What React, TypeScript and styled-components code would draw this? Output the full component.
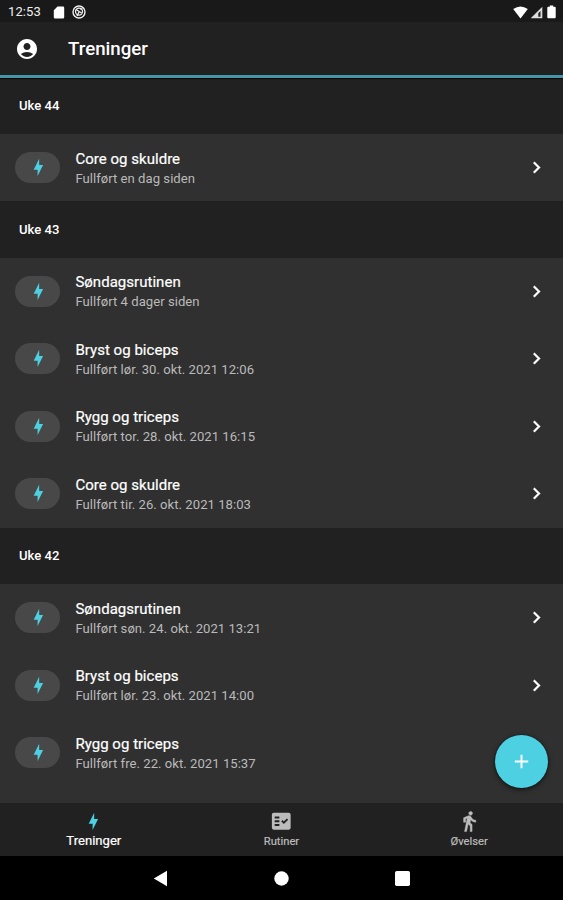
import React from "react";
import styled, { createGlobalStyle } from "styled-components";
import {
  MdAccountCircle,
  MdAdd,
  MdChevronRight,
  MdDirectionsWalk,
  MdFactCheck,
} from "react-icons/md";

const GlobalStyle = createGlobalStyle`
  * { box-sizing: border-box; }
  body { margin: 0; background: #000; font-family: Roboto, sans-serif; color: #fff; }
`;

const Screen = styled.div`
  position: relative;
  display: flex;
  flex-direction: column;
  width: 563px;
  height: 900px;
  overflow: hidden;
  background: #303030;
`;

const StatusBar = styled.div`
  display: flex;
  align-items: center;
  flex: none;
  height: 22px;
  padding: 2px 5px 0 8px;
  background: #191919;
`;

const Clock = styled.span`
  width: 44.5px;
  font-size: 13px;
  line-height: 20px;
  letter-spacing: 0.1px;
  color: #eee;
`;

const StatusIcons = styled.div<{ $end?: boolean }>`
  display: flex;
  align-items: center;
  gap: ${(p) => (p.$end ? 2 : 7)}px;
  margin-left: ${(p) => (p.$end ? "auto" : 0)};
  svg { display: block; }
`;

const AppBar = styled.header`
  display: flex;
  align-items: center;
  flex: none;
  gap: 29px;
  height: 55.7px;
  padding: 2px 15px 0;
  border-bottom: 3px solid #4594a8;
  background: #212121;
  box-shadow: 0 1px 1px #090606;
  z-index: 1;
  svg { display: block; }
`;

const Title = styled.h1`
  margin: 0;
  font-size: 18.7px;
  font-weight: 500;
  line-height: 24px;
`;

const List = styled.main`
  flex: 1;
  min-height: 0;
  overflow: hidden;
`;

const WeekHeading = styled.h2`
  display: flex;
  align-items: center;
  height: 56.2px;
  margin: 0;
  padding: 0 19px;
  background: #212121;
  font-size: 13.1px;
  font-weight: 500;
`;

const Row = styled.div`
  display: flex;
  align-items: center;
  height: 67.5px;
  padding: 0 15px 0 15.4px;
`;

const Chip = styled.div`
  display: flex;
  align-items: center;
  justify-content: center;
  width: 45px;
  height: 31px;
  margin-right: 15px;
  border-radius: 16px;
  background: #484848;
`;

const RowText = styled.div`
  flex: 1;
  padding-top: 2px;
`;

const RowTitle = styled.div`
  font-size: 15px;
  line-height: 19px;
  letter-spacing: 0.03px;
  -webkit-text-stroke: 0.2px #fff;
`;

const RowDetail = styled.div`
  font-size: 13.1px;
  line-height: 19px;
  letter-spacing: 0.03px;
  color: #bababa;
`;

const Chevron = styled(MdChevronRight)`
  path:last-child {
    stroke: #fff;
    stroke-width: 0.4px;
  }
`;

const TabBar = styled.nav`
  display: grid;
  grid-template-columns: repeat(3, 1fr);
  flex: none;
  height: 53px;
  background: #212121;
`;

const Tab = styled.div<{ $active?: boolean }>`
  display: flex;
  flex-direction: column;
  align-items: center;
  padding-top: 7px;
  color: ${(p) => (p.$active ? "#fff" : "#bcbcbc")};
  font-size: ${(p) => (p.$active ? 13.1 : 11.2)}px;
  line-height: ${(p) => (p.$active ? 16 : 18)}px;
  -webkit-text-stroke: 0.2px currentColor;
`;

const TabIcon = styled.div`
  display: flex;
  align-items: center;
  height: 23px;
`;

const WalkIcon = styled(MdDirectionsWalk)`
  path:last-child {
    stroke: currentColor;
    stroke-width: 0.5px;
  }
`;

const SystemBar = styled.footer`
  display: flex;
  align-items: center;
  justify-content: center;
  flex: none;
  gap: 106px;
  height: 44px;
  background: #000;
`;

const AddButton = styled.button`
  position: absolute;
  right: 15px;
  bottom: 112px;
  display: flex;
  align-items: center;
  justify-content: center;
  width: 53px;
  height: 53px;
  padding: 0;
  border: 0;
  border-radius: 50%;
  background: #4dd0e1;
  color: #fff;
  box-shadow: 0 2px 5px rgba(0, 0, 0, 0.5), 0 0 2px rgba(0, 0, 0, 0.6);
`;

const Bolt = () => (
  <svg width="18.75" height="18.75" viewBox="0 0 24 24" fill="#4dd0e1">
    <path d="M11 15H6L13 1V9H18L11 23V15Z" />
  </svg>
);

const weeks = [
  { name: "Uke 44", items: [["Core og skuldre", "Fullført en dag siden"]] },
  {
    name: "Uke 43",
    items: [
      ["Søndagsrutinen", "Fullført 4 dager siden"],
      ["Bryst og biceps", "Fullført lør. 30. okt. 2021 12:06"],
      ["Rygg og triceps", "Fullført tor. 28. okt. 2021 16:15"],
      ["Core og skuldre", "Fullført tir. 26. okt. 2021 18:03"],
    ],
  },
  {
    name: "Uke 42",
    items: [
      ["Søndagsrutinen", "Fullført søn. 24. okt. 2021 13:21"],
      ["Bryst og biceps", "Fullført lør. 23. okt. 2021 14:00"],
      ["Rygg og triceps", "Fullført fre. 22. okt. 2021 15:37"],
    ],
  },
];

export default function App() {
  return (
    <Screen>
      <GlobalStyle />
      <StatusBar>
        <Clock>12:53</Clock>
        <StatusIcons>
          <svg width="12" height="13" viewBox="0 0 12 13">
            <path d="M4.5 .5H10a1.2 1.2 0 0 1 1.2 1.2v9.6a1.2 1.2 0 0 1-1.2 1.2H2A1.2 1.2 0 0 1 .8 11.3V4.2Z" fill="#fff" />
          </svg>
          <svg width="14" height="14" viewBox="0 0 14 14" fill="none" stroke="#eee">
            <circle cx="7" cy="7" r="6" strokeWidth="1.4" />
            <circle cx="7" cy="6.6" r="3.5" strokeWidth="1.3" />
            <path d="M4 4.5 9.5 8M7 7l-2 4M8.5 4.5l2-1" strokeWidth="1.3" />
          </svg>
        </StatusIcons>
        <StatusIcons $end>
          <svg width="15" height="13" viewBox="0 0 15 13">
            <path d="M.2 3Q7.5-2.2 14.8 3L7.5 12.5Z" fill="#fff" />
          </svg>
          <svg width="13" height="13" viewBox="0 0 13 13">
            <path d="M12.3 .7V12.3H.7Z" fill="#ddd" />
            <path d="M10.5 5v5.8H8.3V7.2Z" fill="#222" />
          </svg>
          <svg width="13" height="14" viewBox="0 0 13 14">
            <path d="M4.8 .5h3.4v1.3h1.5a1 1 0 0 1 1 1v9.4a1 1 0 0 1-1 1H3.3a1 1 0 0 1-1-1V2.8a1 1 0 0 1 1-1h1.5Z" fill="#fff" />
          </svg>
        </StatusIcons>
      </StatusBar>
      <AppBar>
        <MdAccountCircle size={24} />
        <Title>Treninger</Title>
      </AppBar>
      <List>
        {weeks.map((week) => (
          <section key={week.name}>
            <WeekHeading>{week.name}</WeekHeading>
            {week.items.map(([title, detail]) => (
              <Row key={title}>
                <Chip><Bolt /></Chip>
                <RowText>
                  <RowTitle>{title}</RowTitle>
                  <RowDetail>{detail}</RowDetail>
                </RowText>
                {week.name === "Uke 42" && title === "Rygg og triceps" ? null : (
                  <Chevron size={23} />
                )}
              </Row>
            ))}
          </section>
        ))}
      </List>
      <TabBar>
        <Tab $active>
          <TabIcon><Bolt /></TabIcon>
          Treninger
        </Tab>
        <Tab>
          <TabIcon><MdFactCheck size={22.5} /></TabIcon>
          Rutiner
        </Tab>
        <Tab>
          <TabIcon><WalkIcon size={22.5} /></TabIcon>
          Øvelser
        </Tab>
      </TabBar>
      <SystemBar>
        <svg width="15" height="17" viewBox="0 0 15 17">
          <path d="M.8 8.5 14 .8v15.4Z" fill="#fff" />
        </svg>
        <svg width="15" height="15" viewBox="0 0 15 15">
          <circle cx="7.5" cy="7.5" r="7.2" fill="#fff" />
        </svg>
        <svg width="15" height="15" viewBox="0 0 15 15">
          <rect width="15" height="15" rx="1.8" fill="#fff" />
        </svg>
      </SystemBar>
      <AddButton aria-label="Ny trening"><MdAdd size={23} /></AddButton>
    </Screen>
  );
}
